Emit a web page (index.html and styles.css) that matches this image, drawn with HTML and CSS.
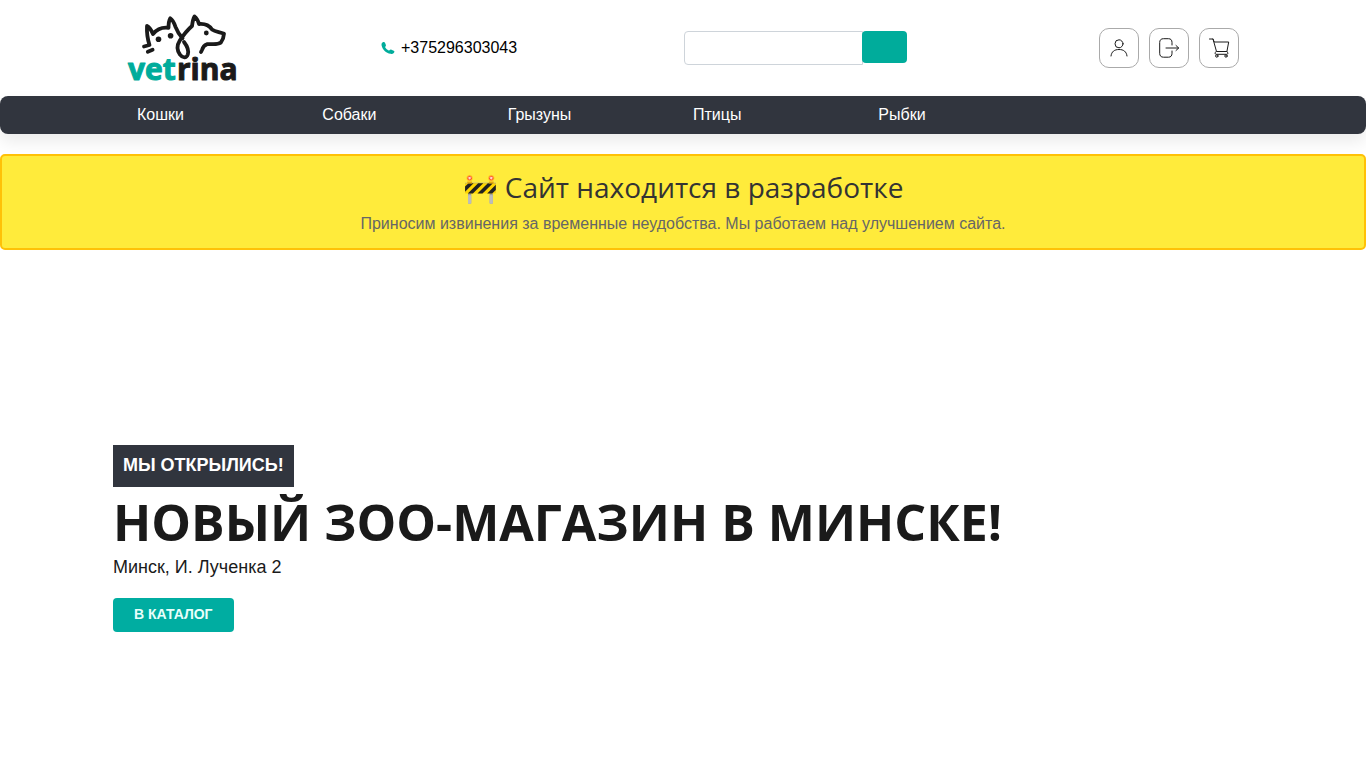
FILE: index.html
```html
<!DOCTYPE html>
<html lang="ru">
<head>
    <meta charset="UTF-8">
    <meta name="viewport" content="width=device-width, initial-scale=1.0">
    <title>Vetrina</title>
    <link rel="stylesheet" href="styles.css">
</head>
<body>
    <header class="header">
        <div class="header-row">
            <a href="#" class="logo" aria-label="vetrina">
                <svg width="114" height="72" viewBox="0 0 114 72">
                    <g fill="none" stroke="#1a1a1a" stroke-width="3.8" stroke-linecap="round" stroke-linejoin="round">
                        <path d="M17 34.500l5.500-1.500c-2-6-2.800-12.500-2.500-19 3 1.500 4.500 4.500 6 8 4-5 9-7 15.500-6.200 0-4 .3-7 1.800-9.500 2.500 1.500 4 5 5.200 8.500 1.500 4 4 8 7 11.500"/>
                        <path d="M57 30c3.500 4.500 4.800 9 3.800 12.500-1.300 4-5.300 3.500-7.800.2-2.800-4-3.200-9.500-.2-14.200 3-4.500 7-10 12.200-14.500.5-4 1-7 2.500-9.500 2 1.500 3.500 4 4.500 7.500 6-.5 10 1 13 5.500 3.500 2.500 8 2.300 12 4.200-.2 3.500-1.300 6.500-3.200 9-4 2.500-8.800 1-13.800 1.500-2.500 1-4.200 3-4.800 5.300L74 40"/>
                        <path d="M20.800 39.800l4.800-2"/>
                    </g>
                    <g fill="#1a1a1a">
                        <circle cx="31.500" cy="27.200" r="2.800"/>
                        <circle cx="43.600" cy="23.800" r="2.800"/>
                        <circle cx="79.300" cy="21" r="2.400"/>
                    </g>
                    <text class="logo-text logo-vet" x="1" y="68">vet</text>
                    <text class="logo-text logo-rina" x="50" y="68">rina</text>
                </svg>
            </a>
            <a href="tel:+375296303043" class="phone">
                <svg width="14" height="14" viewBox="0 0 14 14">
                    <path fill="#00ac9b" d="M1.500 1.400C2.400.8 3.300.8 3.900 1.600l.9 2.200c.3.800.1 1.300-.4 1.800-.3.300-.3.600 0 1.100.8 1.200 1.700 2 2.900 2.600.5.300.8.200 1.200-.1.600-.6 1.200-.8 2-.5l2.200 1c.8.400.9 1 .4 1.700-.8 1.200-2 1.700-3.600 1.400C5 12 1.500 8.800.6 4.500.4 3.100.6 2 1.500 1.400z"/>
                </svg>
                +375296303043
            </a>
            <form class="search">
                <input type="search" class="search-input" aria-label="Поиск">
                <button type="submit" class="search-button" aria-label="Найти"></button>
            </form>
            <div class="actions">
                <a href="#" class="action" aria-label="Профиль">
                    <svg width="20" height="20" viewBox="0 0 20 20">
                        <circle cx="10" cy="5.800" r="4"/>
                        <path d="M2 18c.5-4.500 3.500-6.500 8-6.500s7.500 2 8 6.500"/>
                    </svg>
                </a>
                <a href="#" class="action" aria-label="Войти">
                    <svg width="22" height="20" viewBox="0 0 22 20">
                        <path d="M14 7V4.500c0-2.500-1.200-3.800-3.500-3.800h-5C3 .7 1.700 2 1.700 4.500v10.800c0 2.500 1.300 3.900 3.800 3.900h5c2.300 0 3.500-1.400 3.500-3.900V13M8 10h12.500M18 7.500l2.700 2.500-2.700 2.500"/>
                    </svg>
                </a>
                <a href="#" class="action" aria-label="Корзина">
                    <svg width="22" height="20" viewBox="0 0 22 20">
                        <path d="M1.500 1h3.500l1.200 3h14.500l-1.800 9.500H8.500L5 1M8 13.500c-1.500 1.500-1 2.800.3 2.800h10.500c1.300 0 1.500-1.300.2-2.800"/>
                        <circle cx="8.800" cy="18" r="1.200"/>
                        <circle cx="18" cy="18" r="1.200"/>
                    </svg>
                </a>
            </div>
        </div>
    </header>

    <nav class="nav">
        <ul class="nav-list">
            <li><a href="#">Кошки</a></li>
            <li><a href="#">Собаки</a></li>
            <li><a href="#">Грызуны</a></li>
            <li><a href="#">Птицы</a></li>
            <li><a href="#">Рыбки</a></li>
        </ul>
    </nav>

    <div class="notice">
        <h2 class="notice-title">🚧 Сайт находится в разработке</h2>
        <p class="notice-text">Приносим извинения за временные неудобства. Мы работаем над улучшением сайта.</p>
    </div>

    <main class="hero">
        <span class="hero-label">МЫ ОТКРЫЛИСЬ!</span>
        <h1 class="hero-title">НОВЫЙ ЗОО-МАГАЗИН В МИНСКЕ!</h1>
        <p class="hero-address">Минск, И. Лученка 2</p>
        <a href="#" class="hero-button">В КАТАЛОГ</a>
    </main>
</body>
</html>
```

FILE: styles.css
```css
* {
    margin: 0;
    padding: 0;
    box-sizing: border-box;
}

body {
    background: #fff;
    color: #1a1a1a;
    font-family: "Liberation Sans", Arial, sans-serif;
    font-size: 16px;
    line-height: 24px;
}

a {
    color: inherit;
    text-decoration: none;
}

svg {
    display: block;
    overflow: visible;
}

.header-row,
.nav-list {
    max-width: 1112px;
    margin: 0 auto;
}

.header-row {
    display: grid;
    grid-template-columns: 254fr 303fr 223fr 332fr;
    align-items: center;
    height: 96px;
}

.logo-text {
    font-family: "Open Sans", sans-serif;
    font-size: 30px;
    font-weight: 700;
    stroke-width: 1px;
    stroke-linejoin: round;
}

.logo-vet {
    fill: #00ac9b;
    stroke: #00ac9b;
}

.logo-rina {
    fill: #1a1a1a;
    stroke: #1a1a1a;
}

.phone {
    display: flex;
    align-items: center;
    gap: 6px;
    color: #000;
}

.search {
    display: flex;
    align-items: flex-start;
    min-width: 0;
}

.search-input {
    flex: 1;
    min-width: 0;
    height: 34px;
    padding: 0 10px;
    border: 1px solid #ced4da;
    border-radius: 4px 0 0 4px;
    background: #fff;
    font: inherit;
}

.search-button {
    width: 45px;
    height: 32px;
    margin-left: -1px;
    border: 0;
    border-radius: 4px;
    background: #00ac9b;
    cursor: pointer;
}

.actions {
    display: flex;
    justify-content: flex-end;
    gap: 10px;
}

.action {
    display: flex;
    align-items: center;
    justify-content: center;
    width: 40px;
    height: 40px;
    border: 1px solid #aaa;
    border-radius: 10px;
}

.action svg {
    fill: none;
    stroke: #1a1a1a;
    stroke-linecap: round;
    stroke-linejoin: round;
}

.nav {
    background: #31353e;
    border-radius: 8px;
    box-shadow: 0 8px 16px rgba(0, 0, 0, 0.08);
}

.nav-list {
    display: grid;
    grid-template-columns: repeat(6, 1fr);
    list-style: none;
}

.nav-list a {
    display: block;
    padding: 7px 10px;
    color: #fff;
}

.notice {
    margin-top: 20px;
    padding: 14px 14px 12px;
    border: 2px solid #ffc107;
    border-radius: 5px;
    background: #ffeb3b;
    text-align: center;
}

.notice-title {
    margin-bottom: 8px;
    color: #333;
    font-family: "Open Sans", sans-serif;
    font-size: 28px;
    font-weight: 400;
    line-height: 34px;
}

.notice-text {
    color: #666;
}

.hero {
    max-width: 1140px;
    margin: 0 auto;
    padding: 195px 0 80px;
}

.hero-label {
    display: block;
    width: fit-content;
    padding: 8px 10px 10px;
    background: #31353e;
    color: #fff;
    font-size: 18px;
    font-weight: 700;
}

.hero-title {
    margin-top: 7px;
    overflow: hidden;
    font-family: "Open Sans", sans-serif;
    font-size: 50px;
    font-weight: 700;
    line-height: 56px;
}

.hero-address {
    margin-top: 5px;
    font-size: 18px;
}

.hero-button {
    display: inline-block;
    margin-top: 19px;
    padding: 4px 21px 6px;
    border-radius: 4px;
    background: #00ada1;
    color: #e8fffb;
    font-size: 14px;
    font-weight: 700;
}
```
